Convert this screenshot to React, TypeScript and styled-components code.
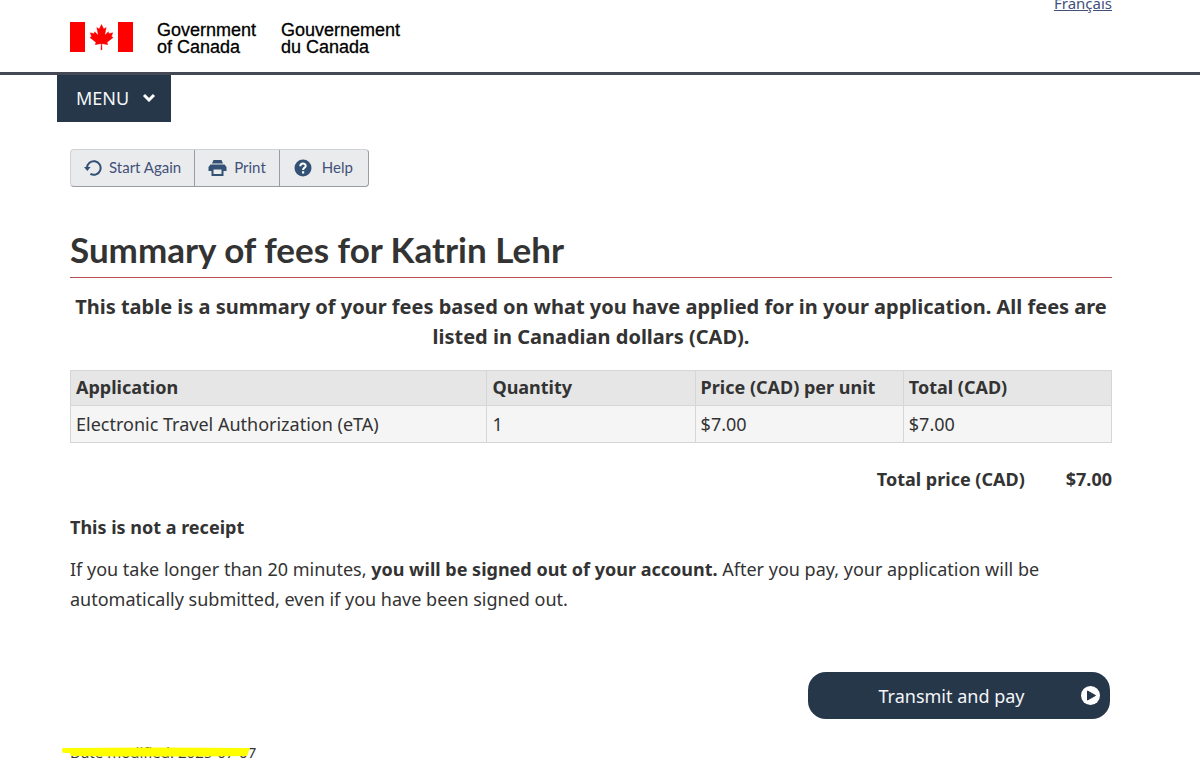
import React from "react";
import styled, { createGlobalStyle } from "styled-components";

const GlobalStyle = createGlobalStyle`
  * { box-sizing: border-box; }
  body {
    margin: 0;
    background: #fff;
    color: #333;
    font-family: "Noto Sans", sans-serif;
    font-size: 18px;
    line-height: 30px;
    overflow-x: hidden;
  }
`;

const Page = styled.div`
  display: flow-root;
  overflow: hidden;
`;

const Header = styled.header`
  display: flex;
  justify-content: space-between;
  align-items: flex-start;
  padding: 0 88px 16px 70px;
  border-bottom: 3px solid #444955;
`;

const Brand = styled.a`
  display: flex;
  align-items: flex-end;
  margin-top: 22px;
  color: #000;
  text-decoration: none;
`;

const Flag = styled.svg`
  display: block;
  width: 63px;
  height: 30px;
  margin: 0 24px 4px 0;
`;

const BrandName = styled.span`
  margin-right: 25px;
  font-family: "Liberation Sans", sans-serif;
  font-size: 18px;
  line-height: 17px;
  -webkit-text-stroke: 0.3px #000;
`;

const LanguageLink = styled.a`
  margin-top: -12px;
  color: #42507a;
  font-size: 15px;
`;

const MenuButton = styled.button`
  display: flex;
  align-items: center;
  gap: 13px;
  height: 47px;
  margin: 0 0 0 57px;
  padding: 0 15px 2px 19px;
  border: 0;
  background: #26374a;
  color: #f4f6f8;
  font: 18px "Noto Sans", sans-serif;
`;

const Content = styled.main`
  padding: 27px 88px 0 70px;
`;

const Toolbar = styled.div`
  display: flex;
  width: fit-content;
  height: 38px;
  border: 1px solid #cfd1d4;
  border-right-color: #999ca1;
  border-bottom-color: #999ca1;
  border-radius: 4px;
  background: #eaebed;
  overflow: hidden;
`;

const ToolButton = styled.button<{ $wide?: boolean }>`
  display: flex;
  align-items: center;
  gap: ${({ $wide }) => ($wide ? 10 : 7)}px;
  padding: 0 ${({ $wide }) => ($wide ? 15 : 13)}px 0 ${({ $wide }) => ($wide ? 14 : 13)}px;
  border: 0;
  background: transparent;
  color: #435179;
  font: 15px/20px Lato, sans-serif;

  & + & { border-left: 1px solid #999ca1; }
  span { padding-bottom: 3px; }
  svg { display: block; }
`;

const Title = styled.h1`
  margin: 39px 0 0;
  padding-bottom: 4px;
  border-bottom: 1px solid #b95055;
  font: 700 35px/47px Lato, sans-serif;
`;

const FeeTable = styled.table`
  width: 100%;
  border-collapse: collapse;
  table-layout: fixed;

  caption {
    padding: 14px 0 18px;
    font-size: 20px;
    font-weight: 700;
    text-align: center;
  }
  th, td {
    padding: 3px 5px;
    border: 1px solid #d6d6d6;
    text-align: left;
  }
  th { padding: 2px 5px 4px; background: #e6e6e6; line-height: 28px; }
  td { background: #f5f5f5; }
  th:first-child { width: 40%; }
`;

const TotalRow = styled.p`
  display: flex;
  justify-content: flex-end;
  gap: 41px;
  margin: 21px 0 0;
  font-weight: 700;
`;

const Paragraph = styled.p<{ $space: number }>`
  margin: ${({ $space }) => $space}px 0 0;
`;

const Actions = styled.div`
  display: flex;
  justify-content: flex-end;
  margin-top: 58px;
  padding-right: 2px;
`;

const PayButton = styled.button`
  display: flex;
  align-items: center;
  width: 302px;
  height: 47px;
  padding: 0 10px 0 14px;
  border: 0;
  border-radius: 18px;
  background: #26374a;
  color: #f4f6f8;
  font: 18px "Noto Sans", sans-serif;

  span { flex: 1; text-align: center; }
`;

const Modified = styled.p`
  position: relative;
  width: fit-content;
  margin: 23px 0 14px;
  font-size: 15px;
  line-height: 20px;
`;

const Highlight = styled.svg`
  position: absolute;
  left: -8px;
  top: 4px;
  width: 190px;
  height: 12px;
`;

export default function App() {
  return (
    <Page>
      <GlobalStyle />
      <Header>
        <Brand href="#">
          <Flag viewBox="0 0 63 30" aria-hidden="true">
            <path fill="#f00" d="M0 0h15v30H0zM48 0h15v30H48z" />
            <path
              fill="#f00"
              stroke="#f00"
              strokeWidth="60"
              transform="translate(1.5 0) scale(.00625)"
              d="M4890 4430l-45-863a95 95 0 0 1 111-98l859 151-116-320a65 65 0 0 1 20-73l941-762-212-99a65 65 0 0 1-34-79l186-572-542 115a65 65 0 0 1-73-38l-105-247-423 454a65 65 0 0 1-111-57l204-1052-327 189a65 65 0 0 1-91-27l-332-652-332 652a65 65 0 0 1-91 27l-327-189 204 1052a65 65 0 0 1-111 57l-423-454-105 247a65 65 0 0 1-73 38l-542-115 186 572a65 65 0 0 1-34 79l-212 99 941 762a65 65 0 0 1 20 73l-116 320 859-151a95 95 0 0 1 111 98l-45 863z"
            />
          </Flag>
          <BrandName>Government<br />of Canada</BrandName>
          <BrandName lang="fr">Gouvernement<br />du Canada</BrandName>
        </Brand>
        <LanguageLink href="#" lang="fr">Français</LanguageLink>
      </Header>
      <MenuButton type="button">
        MENU
        <svg width="14" height="9" viewBox="0 0 14 9" aria-hidden="true">
          <path d="M2 2l5 5 5-5" fill="none" stroke="#fff" strokeWidth="3" />
        </svg>
      </MenuButton>
      <Content>
        <Toolbar>
          <ToolButton type="button">
            <svg width="18" height="18" viewBox="0 0 18 18" aria-hidden="true">
              <path d="M3 9a6.800 6.800 0 1 1 3.400 5.900" fill="none" stroke="#335075" strokeWidth="2" />
              <path d="M0 8h6.600L3.300 12z" fill="#335075" />
            </svg>
            <span>Start Again</span>
          </ToolButton>
          <ToolButton type="button">
            <svg width="19" height="18" viewBox="0 0 19 18" aria-hidden="true">
              <path fill="#335075" d="M5.500 1h8l1.500 3.500H4zM2.500 5.500h14l2 2.500v4h-3v5h-12v-5h-3V8z" />
              <path fill="#eaebed" d="M5.500 10.500h8v4.500h-8z" />
            </svg>
            <span>Print</span>
          </ToolButton>
          <ToolButton type="button" $wide>
            <svg width="18" height="18" viewBox="0 0 18 18" aria-hidden="true">
              <circle cx="9" cy="9" r="8.500" fill="#335075" />
              <path d="M6.300 7.200C6.400 3.700 11.800 3.900 11.700 6.900 11.700 8.800 9.100 8.600 9.100 10.900" fill="none" stroke="#fff" strokeWidth="2" />
              <path d="M8 12.200h2.200v2.200H8z" fill="#fff" />
            </svg>
            <span>Help</span>
          </ToolButton>
        </Toolbar>
        <Title>Summary of fees for Katrin Lehr</Title>
        <FeeTable>
          <caption>
            This table is a summary of your fees based on what you have applied for in your
            application. All fees are listed in Canadian dollars (CAD).
          </caption>
          <thead>
            <tr>
              <th scope="col">Application</th>
              <th scope="col">Quantity</th>
              <th scope="col">Price (CAD) per unit</th>
              <th scope="col">Total (CAD)</th>
            </tr>
          </thead>
          <tbody>
            <tr>
              <td>Electronic Travel Authorization (eTA)</td>
              <td>1</td>
              <td>$7.00</td>
              <td>$7.00</td>
            </tr>
          </tbody>
        </FeeTable>
        <TotalRow>
          <span>Total price (CAD)</span>
          <span>$7.00</span>
        </TotalRow>
        <Paragraph $space={18}><strong>This is not a receipt</strong></Paragraph>
        <Paragraph $space={12}>
          If you take longer than 20 minutes, <strong>you will be signed out of your account.</strong>{" "}
          After you pay, your application will be automatically submitted, even if you have been
          signed out.
        </Paragraph>
        <Actions>
          <PayButton type="button">
            <span>Transmit and pay</span>
            <svg width="19" height="19" viewBox="0 0 19 19" aria-hidden="true">
              <circle cx="9.500" cy="9.500" r="9.500" fill="#fff" />
              <path d="M6.500 5l8 4.500-8 4.500z" fill="#26374a" stroke="#26374a" strokeLinejoin="round" />
            </svg>
          </PayButton>
        </Actions>
        <Modified>
          Date modified: <time dateTime="2025-07-07">2025-07-07</time>
          <Highlight viewBox="0 0 190 12" aria-hidden="true">
            <path d="M1 2q90-1 187 0l-3 8q-88 1-176 0l-1-3H1q-2-3 0-5z" fill="#ff0" />
          </Highlight>
        </Modified>
      </Content>
    </Page>
  );
}
